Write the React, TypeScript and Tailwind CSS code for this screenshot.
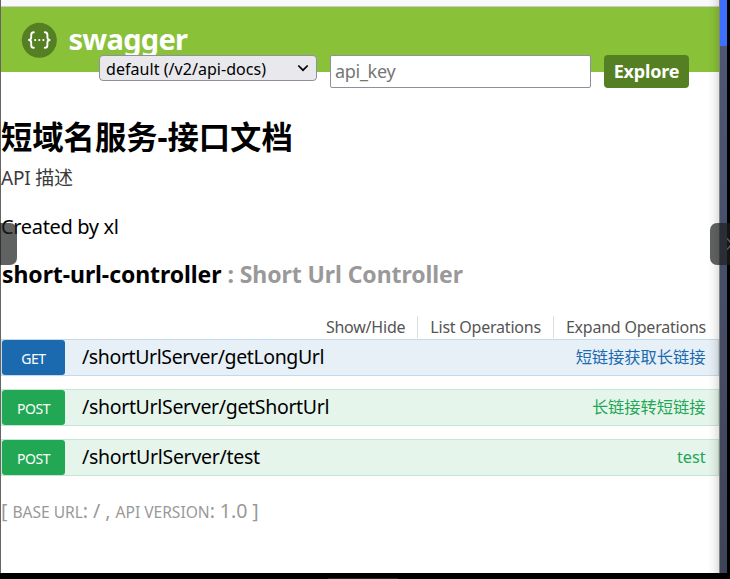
import React from "react";

const sans = "font-['Noto_Sans','Noto_Sans_CJK_SC',sans-serif]";

type Operation = {
  method: string;
  path: string;
  summary: string;
  row: string;
  badge: string;
  text: string;
  pathSpacing: string;
};

const operations: Operation[] = [
  {
    method: "GET",
    path: "/shortUrlServer/getLongUrl",
    summary: "短链接获取长链接",
    row: "border-[#c3d9ec] bg-[#e7f0f7]",
    badge: "bg-[#1b6ab0] tracking-[-0.5px]",
    text: "text-[#1b6ab0]",
    pathSpacing: "tracking-[-0.39px]",
  },
  {
    method: "POST",
    path: "/shortUrlServer/getShortUrl",
    summary: "长链接转短链接",
    row: "border-[#c3e8d1] bg-[#e6f5ec]",
    badge: "bg-[#22a755] tracking-[-0.5px]",
    text: "text-[#22a755]",
    pathSpacing: "tracking-[-0.32px]",
  },
  {
    method: "POST",
    path: "/shortUrlServer/test",
    summary: "test",
    row: "border-[#c3e8d1] bg-[#e6f5ec]",
    badge: "bg-[#22a755] tracking-[-0.5px]",
    text: "text-[#22a755]",
    pathSpacing: "tracking-[-0.27px]",
  },
];

function SwaggerLogo() {
  return (
    <svg width="36" height="36" viewBox="0 0 36 36" fill="none">
      <circle cx="18.3" cy="18.3" r="17.5" fill="#547f22" />
      <g stroke="#fff" strokeWidth="1.9" strokeLinecap="round" strokeLinejoin="round">
        <path d="M12.8 10.2c-2.200 0-2.600.8-2.600 2.600v2.500c0 1.700-.7 2.500-2.200 2.700 1.500.2 2.200 1 2.200 2.700v2.500c0 1.800.4 2.600 2.600 2.600" />
        <path d="M23.800 10.200c2.200 0 2.600.8 2.600 2.600v2.500c0 1.700.7 2.500 2.200 2.700-1.500.2-2.200 1-2.200 2.700v2.500c0 1.800-.4 2.600-2.600 2.600" />
      </g>
      <g fill="#fff">
        <circle cx="14.200" cy="18.100" r="1.100" />
        <circle cx="18.300" cy="18.100" r="1.100" />
        <circle cx="22.400" cy="18.100" r="1.100" />
      </g>
    </svg>
  );
}

function Header() {
  return (
    <header className="h-[88px] shrink-0">
      <div className="h-[65px] bg-[#89c139] pl-[19.5px] pt-[15px]">
        <a className="flex h-9 items-center">
          <SwaggerLogo />
          <span className="ml-[12px] -mt-[3px] text-[29px] leading-9 font-bold tracking-[-0.7px] text-white">swagger</span>
        </a>
      </div>
      <form className="relative -mt-[17px] flex items-start pl-[98px]">
        <div className="flex h-[26px] w-[218px] items-center justify-between rounded-[4px] border border-[#8f8f9d] bg-[#e9e9ed] pr-[7px] pl-[6px] text-[16px] text-black">
          <span className="pt-px tracking-[0.05px] whitespace-nowrap">default (/v2/api-docs)</span>
          <svg width="12" height="12" viewBox="0 0 12 12" fill="none" stroke="#000" strokeWidth="1.7">
            <path d="M1.3 3.5 6 8.2l4.7-4.7" />
          </svg>
        </div>
        <input
          placeholder="api_key"
          className="ml-[13px] h-[33px] w-[261px] rounded-[2px] border border-[#8f8f9d] bg-white px-1 pb-[2px] text-[18px] tracking-[-0.3px] placeholder:text-[#757575]"
        />
        <a className="ml-[13px] flex h-[33px] w-[85px] items-center justify-center rounded-[4px] bg-[#547f22] text-[18px] font-bold tracking-[-0.2px] text-white">
          Explore
        </a>
      </form>
    </header>
  );
}

function OperationRow({ op }: { op: Operation }) {
  return (
    <li className={`flex h-[37px] items-center border ${op.row} ${op.text}`}>
      <span
        className={`flex h-[35px] w-[63px] shrink-0 items-center justify-center rounded-[3px] pt-px text-[14px] text-white ${op.badge}`}
      >
        {op.method}
      </span>
      <span className={`ml-[17px] flex-1 pb-px text-[19.5px] leading-[34px] text-black ${op.pathSpacing}`}>{op.path}</span>
      <span className="pr-[12.5px] text-[16.3px] leading-[35px] tracking-[-0.05px]">{op.summary}</span>
    </li>
  );
}

export default function App() {
  return (
    <div className={`relative flex h-[579px] w-[730px] overflow-hidden bg-black pb-[6px] ${sans}`}>
      <div className="w-px bg-[#656565]" />
      <div className="relative flex w-[718px] flex-col bg-white">
        <div className="h-[7px] shrink-0 border-b border-[#cccccf] bg-[#f9f9fb]" />
        <Header />
        <main>
          <h1 className="mt-[19px] h-[46px] text-[31.3px] leading-[46px] font-bold whitespace-nowrap text-black">
            短域名服务-接口文档
          </h1>
          <p className="mt-[2px] h-8 text-[19px] leading-8 tracking-[-0.2px] text-[#3b3b3b]">API 描述</p>
          <p className="mt-[17px] h-8 text-[20px] leading-8 tracking-[-0.34px] text-black">Created by xl</p>
          <h2 className="mt-[15px] flex h-8 gap-[6px] pl-px text-[23px] leading-8 font-bold tracking-[-0.08px] whitespace-nowrap">
            <span className="text-black">short-url-controller</span>
            <span className="text-[#999]">: Short Url Controller</span>
          </h2>
          <ul className="mt-[26px] flex h-[22px] justify-end divide-x divide-[#ddd] text-[16px] leading-[22px] tracking-[-0.22px] text-[#555]">
            <li className="px-3">Show/Hide</li>
            <li className="px-3">List Operations</li>
            <li className="pr-[13px] pl-3">Expand Operations</li>
          </ul>
          <ul className="mt-[1px] flex flex-col gap-[13px]">
            {operations.map((op) => (
              <OperationRow key={op.path} op={op} />
            ))}
          </ul>
          <p className="mt-[19px] h-8 text-[19.5px] leading-8 tracking-[-0.03px] whitespace-nowrap text-[#999]">
            [ <span className="text-[15.6px]">BASE URL</span>: / , <span className="text-[15.6px]">API VERSION</span>: 1.0 ]
          </p>
        </main>
        <div className="absolute inset-y-0 right-0 w-[11px] bg-linear-to-r from-transparent via-black/4 to-black/12" />
      </div>
      <div className="w-px bg-[#85827e]" />
      <div className="w-[7px] bg-linear-to-b from-[#505877] to-[#3e4458]">
        <div className="h-[46px] bg-[#3e70ff]" />
      </div>
      <div className="absolute top-[223px] left-0 h-[42px] w-[17px] rounded-r-[7px] bg-[#1c2020]/70" />
      <div className="absolute top-[223px] right-0 flex h-[42px] w-5 items-center justify-end rounded-l-[7px] bg-[#1c2020]/70">
        <svg width="3" height="12" viewBox="0 0 3 12" fill="none" stroke="#5b5b58" strokeWidth="1.5">
          <path d="M0 0.5 5 6 0 11.5" />
        </svg>
      </div>
      <div className="absolute bottom-0 left-[328px] h-px w-[70px] bg-[#252525]" />
    </div>
  );
}
